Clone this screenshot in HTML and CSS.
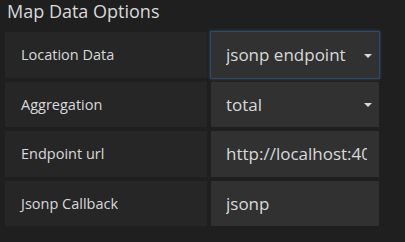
FILE: index.html
```html
<!DOCTYPE html>
<html>
<head lang="en">
    <meta charset="UTF-8">
    <title>Map Data Options</title>
    <link rel="stylesheet" href="styles.css">
</head>
<body>
<div id="options">
    <h5 class="section-heading">Map Data Options</h5>
    <div class="form-row">
        <span class="form-label">Location Data</span>
        <div class="form-field select focused">
            <span class="field-text">jsonp endpoint</span>
            <span class="caret"></span>
        </div>
    </div>
    <div class="form-row">
        <span class="form-label">Aggregation</span>
        <div class="form-field select">
            <span class="field-text">total</span>
            <span class="caret"></span>
        </div>
    </div>
    <div class="form-row">
        <span class="form-label">Endpoint url</span>
        <div class="form-field">
            <span class="field-text">http://localhost:4000/data</span>
        </div>
    </div>
    <div class="form-row">
        <span class="form-label">Jsonp Callback</span>
        <div class="form-field">
            <span class="field-text">jsonp</span>
        </div>
    </div>
</div>
</body>
</html>
```
FILE: styles.css
```css
body, html {
    margin: 0;
    height: 100%;
    width: 100%;
    overflow: hidden;
    background-color: #1f1f1f;
    font-family: "Open Sans", "Liberation Sans", sans-serif;
    color: #d8d9da;
}

#options {
    padding: 0 0 0 5px;
}

.section-heading {
    margin: 0 0 9px 2px;
    font-size: 18px;
    font-weight: 400;
    line-height: 23px;
}

/* Rows */
.form-row {
    display: flex;
    gap: 4px;
    margin-bottom: 4px;
    height: 45.5px;
}

.form-label {
    display: flex;
    align-items: center;
    width: 202px;
    padding-left: 16px;
    box-sizing: border-box;
    background-color: #262626;
    font-size: 14.5px;
}

.form-field {
    display: flex;
    align-items: center;
    width: 168px;
    padding: 0 12px 0 15px;
    box-sizing: border-box;
    background-color: #313131;
    font-size: 17px;
}

.form-field.select {
    padding-right: 7px;
}

.field-text {
    flex: 1;
    overflow: hidden;
    white-space: nowrap;
}

.form-field.focused {
    box-shadow: 0 0 0 1px #2f4a63, 0 0 3px 1px rgba(70, 120, 170, 0.5);
}

.caret {
    width: 0;
    height: 0;
    margin-top: 2px;
    border-left: 4px solid transparent;
    border-right: 4px solid transparent;
    border-top: 4px solid #d8d9da;
}
```
